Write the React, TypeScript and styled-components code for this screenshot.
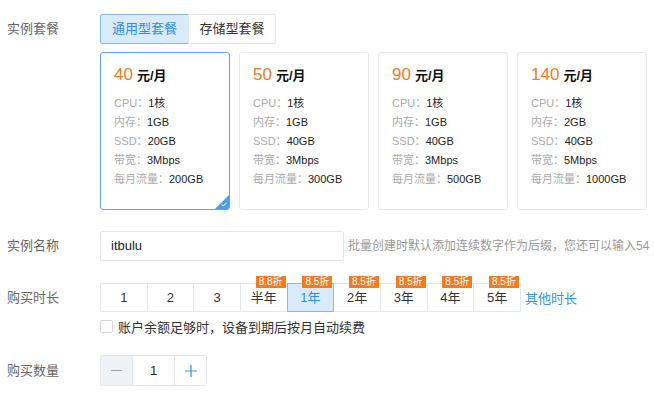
import React, { useState } from "react";
import styled, { createGlobalStyle } from "styled-components";

const Global = createGlobalStyle`
  html, body { margin: 0; padding: 0; background: #fff; }
  body { font-family: "Liberation Sans", "Noto Sans CJK SC", sans-serif; color: #333; overflow: hidden; }
  * { box-sizing: border-box; }
`;

const Page = styled.div`
  width: 654px;
  height: 409px;
  padding: 14px 0 0 7px;
  display: flex;
  flex-direction: column;
  white-space: nowrap;
  overflow: hidden;
`;

const Row = styled.div<{ $mt?: number; $align?: string }>`
  display: flex;
  align-items: ${(p) => p.$align || "flex-start"};
  margin-top: ${(p) => p.$mt || 0}px;
`;

const Label = styled.div<{ $h?: number }>`
  width: 93px;
  flex: none;
  font-size: 13px;
  color: #666;
  line-height: ${(p) => p.$h || 30}px;
`;

const Body = styled.div`
  display: flex;
  flex-direction: column;
`;

const Tabs = styled.div`
  display: flex;
`;

const Tab = styled.div<{ $active?: boolean }>`
  width: ${(p) => (p.$active ? 89 : 88)}px;
  height: 30px;
  line-height: 28px;
  text-align: center;
  font-size: 13px;
  border: 1px solid ${(p) => (p.$active ? "#7fbcee" : "#e3e6eb")};
  background: ${(p) => (p.$active ? "#d9eafb" : "#fff")};
  color: ${(p) => (p.$active ? "#2d8fe0" : "#333")};
  margin-left: ${(p) => (p.$active ? 0 : -1)}px;
  border-radius: ${(p) => (p.$active ? "2px 0 0 2px" : "0 2px 2px 0")};
`;

const Cards = styled.div`
  display: flex;
  gap: 9px;
  margin-top: 8px;
`;

const Card = styled.div<{ $active?: boolean }>`
  position: relative;
  width: 130px;
  height: 158px;
  border: 1px solid ${(p) => (p.$active ? "#5aa8ec" : "#e6e8ec")};
  border-radius: 3px;
  padding: 12px 0 0 13px;
  overflow: hidden;
`;

const Price = styled.div`
  display: flex;
  align-items: baseline;
  gap: 4px;
  height: 26px;
`;

const Num = styled.span`
  font-size: 17px;
  color: #f27a24;
`;

const Unit = styled.span`
  font-size: 13px;
  font-weight: bold;
  color: #111;
`;

const Specs = styled.div`
  margin-top: 3px;
  display: flex;
  flex-direction: column;
`;

const Spec = styled.div`
  font-size: 11px;
  line-height: 19px;
  color: #222;
  span { color: #aaa; }
`;

const Corner = styled.div`
  position: absolute;
  right: 0;
  bottom: 0;
  width: 0;
  height: 0;
  border-style: solid;
  border-width: 0 0 14px 14px;
  border-color: transparent transparent #4a9ee8 transparent;
  svg { position: absolute; left: -8px; top: 7px; }
`;

const Input = styled.div`
  width: 244px;
  height: 30px;
  border: 1px solid #e3e6eb;
  border-radius: 2px;
  padding-left: 10px;
  font-size: 13px;
  line-height: 28px;
  color: #222;
`;

const Hint = styled.div`
  margin-left: 4px;
  font-size: 12px;
  color: #999;
  line-height: 30px;
`;

const Durations = styled.div`
  display: flex;
  align-items: center;
`;

const Dur = styled.div<{ $active?: boolean }>`
  position: relative;
  width: 47.67px;
  height: 29px;
  margin-left: -1px;
  border: 1px solid ${(p) => (p.$active ? "#7fbcee" : "#e3e6eb")};
  background: ${(p) => (p.$active ? "#d9eafb" : "#fff")};
  color: ${(p) => (p.$active ? "#2d8fe0" : "#333")};
  z-index: ${(p) => (p.$active ? 1 : 0)};
  font-size: 13px;
  line-height: 27px;
  text-align: center;
  &:first-child { margin-left: 0; border-radius: 2px 0 0 2px; }
`;

const Badge = styled.div`
  position: absolute;
  right: 1px;
  top: -8px;
  height: 12px;
  padding: 0 3px;
  background: #f57a1f;
  color: #fff;
  font-size: 10px;
  line-height: 12px;
`;

const Link = styled.span`
  margin-left: 4px;
  font-size: 13px;
  color: #2d95e6;
`;

const CheckRow = styled.label`
  display: flex;
  align-items: center;
  gap: 5px;
  margin-top: 5px;
  font-size: 13px;
  color: #333;
`;

const Box = styled.span`
  width: 13px;
  height: 13px;
  border: 1px solid #d2d6dc;
  border-radius: 2px;
  background: #fff;
`;

const Stepper = styled.div`
  display: flex;
  height: 31px;
  border: 1px solid #e3e6eb;
  border-radius: 2px;
`;

const StepBtn = styled.div<{ $minus?: boolean }>`
  width: 31px;
  display: flex;
  align-items: center;
  justify-content: center;
  background: ${(p) => (p.$minus ? "#eef1f5" : "#fff")};
`;

const StepVal = styled.div`
  width: 43px;
  border-left: 1px solid #e3e6eb;
  border-right: 1px solid #e3e6eb;
  text-align: center;
  font-size: 13px;
  line-height: 29px;
  color: #222;
`;

const plans = [
  { price: 40, cpu: "1核", mem: "1GB", ssd: "20GB", bw: "3Mbps", flow: "200GB" },
  { price: 50, cpu: "1核", mem: "1GB", ssd: "40GB", bw: "3Mbps", flow: "300GB" },
  { price: 90, cpu: "1核", mem: "1GB", ssd: "40GB", bw: "3Mbps", flow: "500GB" },
  { price: 140, cpu: "1核", mem: "2GB", ssd: "40GB", bw: "5Mbps", flow: "1000GB" },
];

const durations: { t: string; b?: string }[] = [
  { t: "1" },
  { t: "2" },
  { t: "3" },
  { t: "半年", b: "8.8折" },
  { t: "1年", b: "8.5折" },
  { t: "2年", b: "8.5折" },
  { t: "3年", b: "8.5折" },
  { t: "4年", b: "8.5折" },
  { t: "5年", b: "8.5折" },
];

export default function App() {
  const [sel] = useState(0);
  return (
    <>
      <Global />
      <Page>
        <Row>
          <Label>实例套餐</Label>
          <Body>
            <Tabs>
              <Tab $active>通用型套餐</Tab>
              <Tab>存储型套餐</Tab>
            </Tabs>
            <Cards>
              {plans.map((p, i) => (
                <Card key={i} $active={i === sel}>
                  <Price>
                    <Num>{p.price}</Num>
                    <Unit>元/月</Unit>
                  </Price>
                  <Specs>
                    <Spec><span>CPU：</span>{p.cpu}</Spec>
                    <Spec><span>内存：</span>{p.mem}</Spec>
                    <Spec><span>SSD：</span>{p.ssd}</Spec>
                    <Spec><span>带宽：</span>{p.bw}</Spec>
                    <Spec><span>每月流量：</span>{p.flow}</Spec>
                  </Specs>
                  {i === sel && (
                    <Corner>
                      <svg width="6" height="5" viewBox="0 0 6 5">
                        <path d="M0.5 2.5 L2.3 4 L5.5 0.8" stroke="#fff" strokeWidth="1" fill="none" />
                      </svg>
                    </Corner>
                  )}
                </Card>
              ))}
            </Cards>
          </Body>
        </Row>
        <Row $mt={21}>
          <Label>实例名称</Label>
          <Input>itbulu</Input>
          <Hint>批量创建时默认添加连续数字作为后缀，您还可以输入54</Hint>
        </Row>
        <Row $mt={22}>
          <Label $h={29}>购买时长</Label>
          <Body>
            <Durations>
              {durations.map((d, i) => (
                <Dur key={i} $active={i === 4}>
                  {d.t}
                  {d.b && <Badge>{d.b}</Badge>}
                </Dur>
              ))}
              <Link>其他时长</Link>
            </Durations>
            <CheckRow>
              <Box />
              账户余额足够时，设备到期后按月自动续费
            </CheckRow>
          </Body>
        </Row>
        <Row $mt={19}>
          <Label $h={31}>购买数量</Label>
          <Stepper>
            <StepBtn $minus>
              <svg width="11" height="11" viewBox="0 0 11 11">
                <path d="M0 5.5 H11" stroke="#9aa3ad" strokeWidth="1" />
              </svg>
            </StepBtn>
            <StepVal>1</StepVal>
            <StepBtn>
              <svg width="12" height="12" viewBox="0 0 12 12">
                <path d="M0 6 H12 M6 0 V12" stroke="#2d95e6" strokeWidth="1.2" />
              </svg>
            </StepBtn>
          </Stepper>
        </Row>
      </Page>
    </>
  );
}
